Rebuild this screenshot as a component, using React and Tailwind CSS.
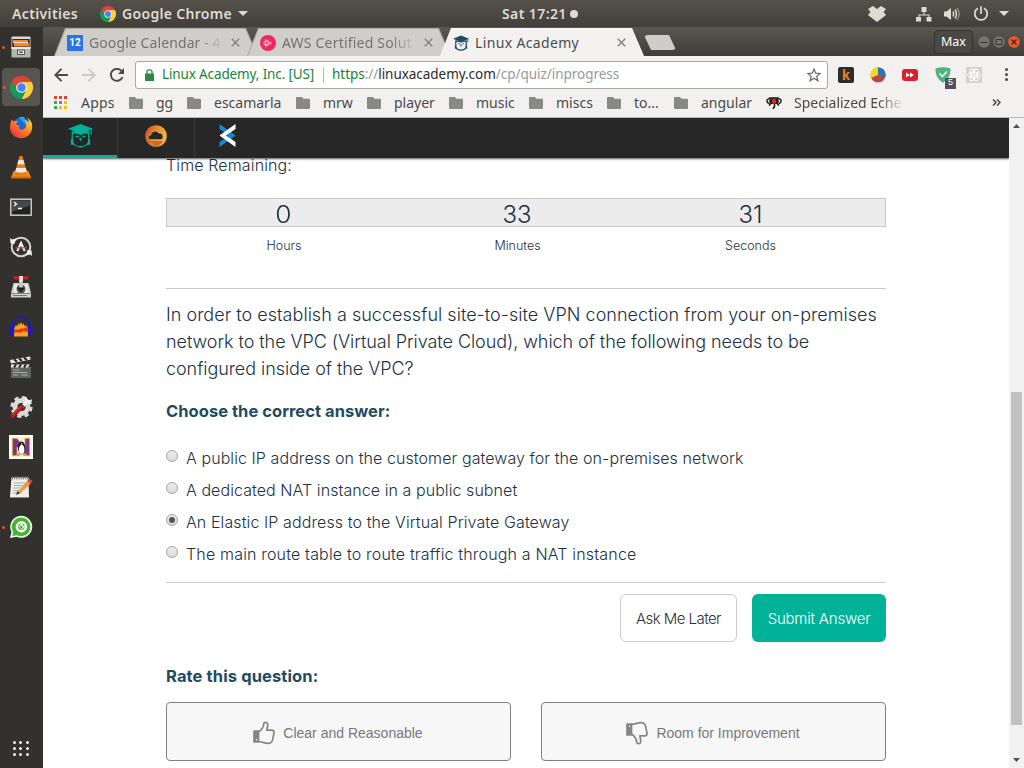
import React from "react";

const ui = "font-['Noto_Sans',sans-serif]";
const page = "font-['Inter',sans-serif]";

function Chrome({ className }) {
  return (
    <svg viewBox="0 0 24 24" className={className}>
      <path d="M1.6 6A12 12 0 0 1 22.4 6L12 6.5 7.24 14.75Z" fill="#db4437" />
      <path d="M22.4 6A12 12 0 0 1 12 24L16.76 14.75 12 6.5Z" fill="#ffcd40" />
      <path d="M12 24A12 12 0 0 1 1.6 6L7.24 14.75 16.76 14.75Z" fill="#0f9d58" />
      <circle cx="12" cy="12" r="5.6" fill="#f1f1f1" />
      <circle cx="12" cy="12" r="4.4" fill="#4285f4" />
    </svg>
  );
}

function Files() {
  return (
    <svg viewBox="0 0 24 24" className="size-6">
      <rect x="2.500" y="1.500" width="19" height="12" rx="1" fill="#d8d8d6" />
      <rect x="3.300" y="4" width="17.400" height="8" fill="#3a2418" />
      <path d="M4 5h15v2H4zM5 8h15v3.500H5z" fill="#ef8a3c" />
      <path d="M4 7h15v1H4z" fill="#fbe3c8" />
      <path d="M2.500 12h19v10.500h-19z" fill="#b4b4b2" />
      <path d="M2.500 12h19v2h-19z" fill="#e8e8e6" />
      <rect x="8.500" y="15" width="7" height="4.500" fill="#eee" stroke="#555" />
      <path d="M10.300 17.300h3.400" stroke="#444" strokeWidth="1.500" />
    </svg>
  );
}

function Firefox() {
  return (
    <svg viewBox="0 0 24 24" className="size-6">
      <defs>
        <linearGradient id="fx" x1="1" y1="0" x2="0.1" y2="1">
          <stop offset="0" stopColor="#fff04a" />
          <stop offset="0.45" stopColor="#ff8a1c" />
          <stop offset="1" stopColor="#f0224e" />
        </linearGradient>
      </defs>
      <circle cx="12.5" cy="11" r="9" fill="#1668d8" />
      <path d="M10 3c2-1.800 4.500-1.500 6-.5-1 .7-1 1.500-.5 2.500 2 1 3 3.500 2.500 6Z" fill="#14a9f5" />
      <path d="M2.800 4.500 4.500 6.600C6 5.500 8 5.600 9 6.500l-2 2.500c.5 1.500 2 1.500 3.800 1.800L9.500 12.800C11 15.500 14 15.300 16.500 12.500c1.500-2.500.5-6-1.500-8 2 .3 4 1.700 4.700 3.500.3-2-.2-4-1.500-5.500C22 5 24 9 23 14c-1.200 5.500-5.500 9.200-11 9.200C5.500 23.200 1 18.500 1 12.500 1 9 1.800 6.500 2.800 4.500Z" fill="url(#fx)" />
    </svg>
  );
}

function Vlc() {
  return (
    <svg viewBox="0 0 24 24" className="size-6">
      <path d="M4.500 16h15L22 23H2Z" fill="#f28a16" />
      <path d="M2 21.500h20V23.500H2Z" fill="#d96b05" />
      <path d="M10.600 1h2.800L18.500 19c-3 2-10 2-13 0Z" fill="#f07c12" />
      <path d="M9.600 5h4.800l1.200 4.200H8.400ZM7.200 13h9.600l1 3.600c-3 1.400-8.600 1.400-11.600 0Z" fill="#e8eaec" />
    </svg>
  );
}

function Terminal() {
  return (
    <svg viewBox="0 0 24 24" className="size-6">
      <rect x="1.800" y="4.200" width="20.400" height="16" fill="#222" stroke="#d6d6d4" strokeWidth="1.400" />
      <path d="M3 5.500h18v5L3 17Z" fill="#45484a" />
      <path d="m5 7 2.500 2L5 11M9 13.500h4" stroke="#fff" strokeWidth="1.300" fill="none" />
    </svg>
  );
}

function Updater() {
  return (
    <svg viewBox="0 0 24 24" className="size-6" fill="none">
      <circle cx="12" cy="12" r="9.300" stroke="#d5d5d3" strokeWidth="2" />
      <path d="M1.500 8.500 1 3l2 1.500L7 3.500 5.500 9ZM22.500 15.500 23 21l-2-1.500-4 1 1.500-5.500Z" fill="#eee" />
      <path d="M8.300 16 12 8l3.700 8" stroke="#fff" strokeWidth="2" />
      <path d="M6.500 12.800h11" stroke="#e05030" strokeWidth="1.300" />
    </svg>
  );
}

function Installer() {
  return (
    <svg viewBox="0 0 24 24" className="size-6">
      <path d="M4.500 8h15L22 18v4.500H2V18Z" fill="#cfcfcd" />
      <path d="M6 9.500h12l1.500 8h-15Z" fill="#efefed" />
      <circle cx="12" cy="14" r="4.500" fill="#54585a" />
      <path d="M2 18.500h20" stroke="#888" />
      <path d="M4 20.500h14" stroke="#777" />
      <path d="M10.300 3h3.400v11h-3.400Z" fill="#c9c9c7" />
      <path d="m8 12.500 4 5 4-5Z" fill="#1d2124" />
      <rect x="4.500" y="1.200" width="15" height="3.200" rx="1.400" fill="#d3191c" />
      <rect x="10" y="1" width="4" height="6" rx="1" fill="#e5e5e3" />
    </svg>
  );
}

function Audacity() {
  return (
    <svg viewBox="0 0 24 24" className="size-6">
      <path d="M5 21.500 5.500 13 7 10l1 1.500L9.500 8l1 2L12 7l1.500 3 1-2L16 11.500l1.500-1.500 1 3 .5 8.500Z" fill="#f3a820" />
      <path d="M5 16c3-3 4 0 6-2s3 1 4.500-1 2.500 1 4 1v2c-3 2-5-1-7 1s-5-1-7.500 1Z" fill="#f03018" />
      <path d="M3 12C4 5 7 2 12 2s8 3 9 10" fill="none" stroke="#1717dc" strokeWidth="1.500" />
      <path d="M4.500 9C-1 12-1 18 4.500 21.500ZM19.500 9C25 12 25 18 19.500 21.500Z" fill="#1717e4" />
    </svg>
  );
}

function Clapper() {
  return (
    <svg viewBox="0 0 24 24" className="size-6">
      <path d="M2 10h20v13H2Z" fill="#606463" />
      <path d="m1 5 20-3.500.7 3L2 8.500Z" fill="#e8e8e6" />
      <path d="m5 4.300 3 2.500M10 3.500l3 2.400M15 2.600 18 5" stroke="#222" strokeWidth="2" />
      <path d="M2 9.500h20v3H2Z" fill="#e8e8e6" />
      <path d="m7 9.500-2 3M12 9.500l-2 3M17 9.500l-2 3M22 9.500l-2 3" stroke="#222" strokeWidth="2" />
      <path d="M4 15h7M4 17.500h14M4 20h5M12 20h7" stroke="#c8ccca" strokeWidth=".7" />
    </svg>
  );
}

function Tools() {
  return (
    <svg viewBox="0 0 24 24" className="size-6" fill="none">
      <circle cx="12.500" cy="12" r="6.500" stroke="#d9d9d7" strokeWidth="5" />
      <circle cx="12.500" cy="12" r="9.600" stroke="#d9d9d7" strokeWidth="3" strokeDasharray="4.200 3.340" />
      <path d="M13 12 19.500 5" stroke="#fff" strokeWidth="3" />
      <path d="M17 1.500c-2 2-1 6 1.500 6.500s5-1 4.500-4l-2.500 2-2-1.500Z" fill="#f2f2f0" />
      <path d="m3.500 21 9.500-9.500" stroke="#b5161a" strokeWidth="4" strokeLinecap="round" />
      <path d="m3.500 20 8.500-8.500" stroke="#e25a55" strokeWidth="1" />
    </svg>
  );
}

function PenguinN() {
  return (
    <svg viewBox="0 0 24 24" className="size-6">
      <path d="M0 0h24v24H0Z" fill="#fff" />
      <path d="M2 2h20v20H2Z" fill="#fbeec4" />
      <path d="M3.500 3.500H8l8 9v-9h4.500v17H16L8 12v8.500H3.500Z" fill="#77388c" stroke="#d6a83e" strokeWidth=".8" />
      <ellipse cx="12.700" cy="13" rx="3.600" ry="6.500" fill="#17171b" />
      <ellipse cx="12.700" cy="14.500" rx="2.700" ry="4.500" fill="#fff" />
      <path d="M7.500 18.500h4l-1 2.500h-3ZM14 18.500h3.500V21h-3Z" fill="#e2a51d" />
      <circle cx="12.700" cy="9" r=".9" fill="#f1b21d" />
    </svg>
  );
}

function Notepad() {
  return (
    <svg viewBox="0 0 24 24" className="size-6">
      <path d="M2.500 2.500h17L20 22H1Z" fill="#eeeeea" />
      <path d="M1 22h19v1H1Z" fill="#888" />
      <path d="M3 3h17" stroke="#777" strokeWidth="3" strokeDasharray="1 1.200" />
      <path d="M5 8h12M5 10.500h11M4.500 13h9M4.500 15.500h6M4 18h4" stroke="#a9a9a5" strokeWidth="1" />
      <path d="m8 18 10-12 3.500 3L11 18.500Z" fill="#f39b3a" />
      <path d="m18 6 2-2.500 3.500 2.500-2 3Z" fill="#d84a43" />
      <path d="m8.500 16-1.500 4 4-1.700Z" fill="#333" />
    </svg>
  );
}

function ChatBubble() {
  return (
    <svg viewBox="0 0 24 24" className="size-6" fill="none">
      <path d="M1 23 2.500 17A11 11 0 1 1 7.500 21.800Z" fill="#f7fff5" />
      <path d="M3.200 21 4.200 17A9.400 9.400 0 1 1 8 20.300Z" fill="#43b72f" />
      <circle cx="12.400" cy="11.700" r="4.500" stroke="#fff" strokeWidth="2.400" />
      <path d="M9.500 11.500 13 8l.8 2.400 2.400.8-3.500 3.300Z" fill="#fff" />
      <circle cx="12.200" cy="12" r="1.500" fill="#43b72f" />
    </svg>
  );
}

const dock = [
  { Icon: Files, running: true },
  { Icon: () => <Chrome className="size-[23px]" />, running: true, active: true },
  { Icon: Firefox },
  { Icon: Vlc },
  { Icon: Terminal },
  { Icon: Updater },
  { Icon: Installer },
  { Icon: Audacity },
  { Icon: Clapper },
  { Icon: Tools },
  { Icon: PenguinN },
  { Icon: Notepad },
  { Icon: ChatBubble, running: true },
];

function Dock() {
  return (
    <nav className="flex w-[43px] shrink-0 flex-col bg-[#33312d]">
      {dock.map(({ Icon, running, active }, i) => (
        <div key={i} className="flex h-10 items-center pl-[2px]">
          <div className={`flex h-[38px] w-[38px] items-center justify-center rounded ${active ? "bg-[#565550]" : ""}`}>
            <span className={`-ml-[7px] mr-[4px] size-[3px] shrink-0 rounded-full ${running ? "bg-[#e95420]" : ""}`} />
            <Icon />
          </div>
        </div>
      ))}
      <div className="mt-auto mb-[12px] ml-[13px] grid w-[16px] grid-cols-3 gap-[3px]">
        {Array.from({ length: 9 }, (_, i) => (
          <span key={i} className="size-[3px] rounded-full bg-[#eeeeec]" />
        ))}
      </div>
    </nav>
  );
}

function TopBar() {
  return (
    <header className={`${ui} flex h-[27px] shrink-0 items-center bg-linear-to-b from-[#55524a] to-[#413f3a] text-[14px] font-semibold text-[#dfdbd2]`}>
      <span className="ml-3 w-[88px] whitespace-nowrap tracking-[0.37px]">Activities</span>
      <Chrome className="size-4" />
      <span className="ml-[6px] w-[116px] whitespace-nowrap tracking-[0.32px]">Google Chrome</span>
      <svg viewBox="0 0 10 5" className="h-[5px] w-[10px]"><path d="M0 0h10L5 5Z" fill="#dfdbd2" /></svg>
      <span className="ml-[254px] w-[68px] whitespace-nowrap tracking-[0.4px]">Sat 17:21</span>
      <span className="size-2 rounded-full bg-[#dfdbd2]" />
      <svg viewBox="0 0 18 16" className="ml-[290px] h-4 w-[18px] shrink-0" fill="#dfdbd2">
        <path d="M5 0 0 3l2.500 3L0 9l2.500 2L9 16l6.500-5L18 9l-2.500-3L18 3l-5-3-4 3Z" />
      </svg>
      <svg viewBox="0 0 16 16" className="ml-[30px] size-4 shrink-0" fill="#dfdbd2">
        <path d="M5.500 1h5v5h-5zM0 11h5v4.500H0zM10.500 11h5v4.500h-5zM7.500 6h1v2.500h5V11h-1V9.500h-9V11h-1V8.500h5z" />
      </svg>
      <svg viewBox="0 0 16 16" className="ml-3 size-4 shrink-0" fill="none" stroke="#dfdbd2" strokeWidth="1.500">
        <path d="M0 5.500h2.500L7 2v12l-4.500-3.500H0Z" fill="#dfdbd2" stroke="none" />
        <path d="M9 5.500q1.500 2.500 0 5" />
        <path d="M11 3.500q3 4.500 0 9" />
        <path d="M13 2q4.500 6 0 12" stroke="#8b8880" />
      </svg>
      <svg viewBox="0 0 16 16" className="ml-[13px] size-4 shrink-0" fill="none" stroke="#dfdbd2" strokeWidth="1.700">
        <path d="M5 2.300a6.200 6.200 0 1 0 6 0M8 .3V8" />
      </svg>
      <svg viewBox="0 0 10 5" className="ml-[10px] h-[5px] w-[10px]"><path d="M0 0h10L5 5Z" fill="#dfdbd2" /></svg>
    </header>
  );
}

function OwlIcon({ className, accent }) {
  return (
    <svg viewBox="0 0 26 26" className={className} fill="none">
      <path d="M4.500 9v6c-1 8 4 9.500 8.500 9.500s9.500-1.500 8.500-9.500V9" fill={accent ? "none" : "#e9eef1"} stroke="currentColor" strokeWidth={accent ? 1.300 : 2} />
      <path d="M3 17v5.500h4Q4.500 20.500 4.500 17ZM23 17v5.500h-4Q21.500 20.500 21.500 17Z" fill="currentColor" />
      <path d="M0 6 13 1l13 5-13 5.500Z" fill="currentColor" />
      <path d="M4.500 8.500 13 10l8.500-1.500v3Q17 10 13 12.500 9 10 4.500 11.500Z" fill="currentColor" />
      <path d="M24 6v6" stroke="currentColor" strokeWidth="1.300" />
      <path d="M8 14.500q1.500-1.500 3 0M15 14.500q1.500-1.500 3 0" stroke="currentColor" strokeWidth="1.300" />
      <path d="M11.500 15.500h3L13 19.500Z" fill="currentColor" />
    </svg>
  );
}

function CloseX() {
  return (
    <svg viewBox="0 0 9 9" className="size-[9px] shrink-0" stroke="#83817d" strokeWidth="1.400">
      <path d="m.8.8 7.400 7.400M8.200.8.8 8.200" />
    </svg>
  );
}

const tabClip = "[clip-path:polygon(11px_0,calc(100%-12px)_0,100%_100%,0_100%)]";

function Tab({ icon, title, active, fade, tracking }) {
  return (
    <div className={`${tabClip} flex h-7 w-[204px] shrink-0 px-[1px] pt-[1px] ${active ? "z-10 bg-[#f8f7f6]" : "-mr-[11px] bg-[#aba9a5]"}`}>
      <div className={`${tabClip} flex w-[202px] items-center pl-[12px] ${active ? "bg-[#f2f1f0] text-[#4c4c4c]" : "bg-[#d0cecb] text-[#737270]"}`}>
        <span className="flex w-[22px] shrink-0">{icon}</span>
        <span className={`w-[133px] shrink-0 text-[14px] whitespace-nowrap ${tracking} ${fade ? "[mask-image:linear-gradient(to_right,black_108px,transparent_135px)]" : ""}`}>
          {title}
        </span>
        <span className="ml-[9px] flex"><CloseX /></span>
      </div>
    </div>
  );
}

function TabStrip() {
  return (
    <div className={`${ui} flex h-[29px] shrink-0 items-end bg-linear-to-b from-[#5a574e] to-[#403e39] pl-[11px]`}>
      <Tab
        title="Google Calendar - 4"
        fade
        tracking="tracking-[0.1px]"
        icon={
          <span className="flex size-4 items-center justify-center bg-[#2a74e8] font-['Roboto',sans-serif] text-[10px] font-bold text-white">12</span>
        }
      />
      <Tab
        title="AWS Certified Solut"
        fade
        tracking="tracking-[0.2px]"
        icon={
          <svg viewBox="0 0 16 16" className="size-4">
            <circle cx="8" cy="8" r="8" fill="#f0285f" />
            <path d="M5.500 4.500 11.500 8l-6 3.500ZM4 6.500h3L9 8 7 9.500H4Z" fill="none" stroke="#ffb5c9" strokeWidth="1" />
          </svg>
        }
      />
      <Tab title="Linux Academy" active tracking="tracking-[0.35px]" icon={<OwlIcon className="size-4 text-[#1f4a60]" />} />
      <div className="mb-[6px] h-[15px] w-[32px] rounded-sm bg-[#cfcdca] [clip-path:polygon(0_0,25px_0,100%_100%,7px_100%)]" />
      <div className="mb-[2px] ml-[258px] flex h-6 w-[39px] shrink-0 items-center justify-center rounded border border-[#34322e] bg-[#4b4943] text-[12.5px] text-white">
        Max
      </div>
      <div className="mb-[8px] ml-[5px] flex gap-[3px]">
        <svg viewBox="0 0 12 12" className="size-3"><circle cx="6" cy="6" r="5.700" fill="#77756e" /><path d="M2.500 6.500h7" stroke="#33312d" /></svg>
        <svg viewBox="0 0 12 12" className="size-3"><circle cx="6" cy="6" r="5.700" fill="#77756e" /><path d="M3 3.500h6v5H3Z" fill="none" stroke="#33312d" /></svg>
        <svg viewBox="0 0 12 12" className="size-3"><circle cx="6" cy="6" r="5.800" fill="#f0592f" /><path d="m3.500 3.500 5 5m0-5-5 5" stroke="#4a2012" strokeWidth="1.200" /></svg>
      </div>
    </div>
  );
}

function AddressRow() {
  return (
    <div className="flex h-[37px] shrink-0 items-center pl-[11px]">
      <svg viewBox="0 0 14 14" className="size-[14px] shrink-0" fill="none" stroke="#4a4a4a" strokeWidth="1.900"><path d="M14 7H1.500M7.500 .8 1.300 7l6.200 6.200" /></svg>
      <svg viewBox="0 0 14 14" className="ml-[14px] size-[14px] shrink-0" fill="none" stroke="#cbcac8" strokeWidth="1.900"><path d="M0 7h12.500M6.500.8 12.700 7l-6.200 6.200" /></svg>
      <svg viewBox="0 0 14 14" className="ml-[14px] size-[14px] shrink-0" fill="none" stroke="#4a4a4a" strokeWidth="1.900"><path d="M12.500 9A6 6 0 1 1 11.500 3" /><path d="M14 0v6H8Z" fill="#4a4a4a" stroke="none" /></svg>
      <div className={`${ui} ml-[11px] flex h-7 w-[693px] shrink-0 items-center rounded-[3px] border border-[#a9a8a6] bg-white pl-[9px] text-[13.5px] whitespace-nowrap text-[#178338]`}>
        <svg viewBox="0 0 9 12" className="h-3 w-[9px] shrink-0"><path d="M0 4.500h9V12H0Z" fill="#2d8a46" /><path d="M2 5V2.800Q2 .8 4.500.8T7 2.800V5" fill="none" stroke="#2d8a46" strokeWidth="1.300" /></svg>
        <span className="ml-2 w-[161px] tracking-[-0.13px]">Linux Academy, Inc. [US]</span>
        <span className="h-4 w-px bg-[#b5b5b5]" />
        <span className="ml-[8px] w-[475px] tracking-[-0.04px]">https<span className="text-[#999]">://</span><span className="text-[#2b2b2b]">linuxacademy.com</span><span className="text-[#999]">/cp/quiz/inprogress</span></span>
        <svg viewBox="0 0 14 14" className="size-[14px] shrink-0" fill="none" stroke="#666" strokeWidth="1.200"><path d="m7 1 1.700 4.200 4.500.3-3.500 2.900 1.200 4.400L7 10.300l-3.900 2.500 1.200-4.400L.8 5.500l4.500-.3Z" /></svg>
      </div>
      <div className="ml-[10px] flex size-4 items-center justify-center rounded-xs bg-[#2d2d2d] font-['Liberation_Sans',sans-serif] text-[14px] leading-none font-bold text-[#f58220]">k</div>
      <svg viewBox="0 0 16 16" className="ml-4 size-4 shrink-0">
        <circle cx="8" cy="8" r="7.500" fill="#c04142" />
        <path d="M8 8V.5A7.500 7.500 0 0 0 1 11Z" fill="#f2da1d" />
        <path d="M8 8V.5A7.500 7.500 0 0 1 15 11Z" fill="#3471ae" />
      </svg>
      <svg viewBox="0 0 16 12" className="ml-4 h-3 w-4 shrink-0">
        <rect width="16" height="12" rx="3" fill="#d9202b" />
        <path d="m4 3.500 4 2.500-4 2.500ZM8 3.500l4 2.500-4 2.500Z" fill="#fff" />
      </svg>
      <div className="relative ml-[17px] h-4 w-4 shrink-0">
        <svg viewBox="0 0 16 16" className="size-4">
          <path d="M.5 1.500Q8-1 15.500 1.500 16 11 8 16 0 11 .5 1.500Z" fill="#4fb477" />
          <path d="M4.500 6.500 7.500 9.500 12 4.500" fill="none" stroke="#fff" strokeWidth="1.500" />
        </svg>
        <span className="absolute top-[11px] left-[10px] flex h-[11px] w-[11px] items-center justify-center bg-[#505459] font-['Liberation_Sans',sans-serif] text-[9px] text-white">5</span>
      </div>
      <svg viewBox="0 0 16 16" className="ml-[15px] size-4 shrink-0" fill="none" stroke="#fff">
        <path d="M0 0h16v16H0Z" fill="#d3d2d0" stroke="none" />
        <ellipse cx="8" cy="8" rx="6.500" ry="2.600" />
        <ellipse cx="8" cy="8" rx="6.500" ry="2.600" transform="rotate(60 8 8)" />
        <ellipse cx="8" cy="8" rx="6.500" ry="2.600" transform="rotate(120 8 8)" />
        <circle cx="8" cy="8" r="1" fill="#fff" />
      </svg>
      <div className="ml-[23px] flex flex-col gap-[2px]">
        <span className="size-[3px] rounded-full bg-[#4a4a4a]" />
        <span className="size-[3px] rounded-full bg-[#4a4a4a]" />
        <span className="size-[3px] rounded-full bg-[#4a4a4a]" />
      </div>
    </div>
  );
}

function Folder() {
  return (
    <svg viewBox="0 0 14 12" className="h-3 w-[14px] shrink-0">
      <path d="M1 0h5l1.500 1.800H13a1 1 0 0 1 1 1V11a1 1 0 0 1-1 1H1a1 1 0 0 1-1-1V1a1 1 0 0 1 1-1Z" fill="#888886" />
    </svg>
  );
}

const folders = [
  ["gg", "w-[31px]"],
  ["escamarla", "w-[82px]"],
  ["mrw", "w-[44px]"],
  ["player", "w-[55px]"],
  ["music", "w-[53px]"],
  ["miscs", "w-[51px]"],
  ["to...", "w-[40px]"],
  ["angular", "w-[65px]"],
];

function Bookmarks() {
  const squares = [
    "bg-[#ea4335]", "bg-[#ea4335]", "bg-[#ea4335]",
    "bg-[#34a853]", "bg-[#4285f4]", "bg-[#fbbc05]",
    "bg-[#34a853]", "bg-[#fbbc05]", "bg-[#fbbc05]",
  ];
  return (
    <div className={`${ui} flex h-[25px] shrink-0 items-center border-b border-[#b9b8b6] pb-[5px] pl-[11px] text-[14px] whitespace-nowrap text-[#4a4a4a]`}>
      <div className="grid w-[13px] shrink-0 grid-cols-3 gap-[2px]">
        {squares.map((c, i) => <span key={i} className={`size-[3px] ${c}`} />)}
      </div>
      <span className="ml-[14px] w-[48px] shrink-0 tracking-[0.2px]">Apps</span>
      {folders.map(([name, w]) => (
        <div key={name} className="flex shrink-0 items-center">
          <Folder />
          <span className={`ml-[13px] ${w}`}>{name}</span>
        </div>
      ))}
      <svg viewBox="0 0 16 12" className="h-3 w-4 shrink-0" fill="none" stroke="#17110f" strokeWidth="1.500">
        <path d="M3.500 6.500Q.5 6 1 3l3-2h8l3 2q.5 3-2.500 3.500" strokeWidth="1.300" />
        <path d="M4 1.500h8l1 3-2 2.500H5L3 4.500Z" fill="#2a1512" stroke="none" />
        <circle cx="8" cy="4.500" r="2.400" fill="#e0281a" stroke="none" />
        <path d="M8.500 7v2.500L7 12M5.500 6 3 8.500M10.500 6 13 8.500" />
      </svg>
      <span className="ml-[12px] w-[112px] shrink-0 [mask-image:linear-gradient(to_right,black_85px,transparent_110px)]">Specialized Eche</span>
      <svg viewBox="0 0 9 7" className="ml-[86px] h-[7px] w-[9px] shrink-0" fill="none" stroke="#4a4a4a" strokeWidth="1.500"><path d="m1 .5 3 3-3 3M5 .5l3 3-3 3" /></svg>
    </div>
  );
}

function SiteNav() {
  return (
    <div className="z-10 flex h-10 shrink-0 bg-[#272727] shadow-[0_1px_2px_rgba(0,0,0,0.65)]">
      <div className="flex w-[74px] items-center justify-center border-b-[3px] border-[#00b398]">
        <OwlIcon accent className="-mt-[2px] h-[25px] w-[25px] text-[#00b398]" />
      </div>
      <div className="flex w-[78px] items-center justify-center border-x border-[#3c3c3c] pb-[5px]">
        <svg viewBox="0 0 22 22" className="size-[22px]">
          <defs>
            <linearGradient id="ring" x1="0" y1="0.300" x2="1" y2="0.500">
              <stop offset="0" stopColor="#d0552b" />
              <stop offset="1" stopColor="#f1bd42" />
            </linearGradient>
          </defs>
          <circle cx="11" cy="11" r="10.800" fill="url(#ring)" />
          <path d="M1 10Q1 17 8 18Q4 16 4 14ZM7 16h11q-3 6-9 5Z" fill="#d8652e" />
          <path d="M5.500 14.800C2 14.800 2.200 10.200 5.500 10 6.200 5.800 11.500 4.500 14 8c4.500-.8 5.800 6.300 1.500 6.800Z" fill="#272727" stroke="#f1bd42" strokeWidth=".9" />
        </svg>
      </div>
      <div className="flex w-[65px] items-center justify-center pb-[5px]">
        <svg viewBox="0 0 17 23" className="h-[23px] w-[17px]">
          <path d="M.5 0v5l10 6.500-10 6.500v5L16.500 11.500Z" fill="#0b8ed3" />
          <path d="M16.500 0v5L7 11.500l9.500 6.500v5L.5 11.500Z" fill="#fff" />
          <path d="m7 11.500 3.500-2.300 3 2.300-3 2.300Z" fill="#0b8ed3" />
        </svg>
      </div>
    </div>
  );
}

function ThumbUp({ className }) {
  return (
    <svg viewBox="0 0 22 24" className={className} fill="none" stroke="#858585" strokeWidth="1.700" strokeLinejoin="round">
      <path d="M1 10h4.500v11H1Z" fill="#858585" />
      <circle cx="3.600" cy="18.800" r=".7" fill="#f7f7f7" stroke="none" />
      <path d="M5.500 11C8.500 9 10.500 6 10.800 2.500 11 .8 14.500.8 14.700 3c.2 2-.5 4.500-.9 6.200h5c1.500 0 2.500 1 2.200 2.500L20 17c-.5 3.500-1.500 5.300-4.500 5.300-4 0-6-1.300-10-1.800" />
    </svg>
  );
}

const question = [
  ["In order to establish a successful site-to-site VPN connection from your on-premises", "tracking-[0.03px]"],
  ["network to the VPC (Virtual Private Cloud), which of the following needs to be", "tracking-[-0.06px]"],
  ["configured inside of the VPC?", "tracking-[-0.06px]"],
];

const answers = [
  ["A public IP address on the customer gateway for the on-premises network", "tracking-[0.08px]"],
  ["A dedicated NAT instance in a public subnet", "tracking-[0.07px]"],
  ["An Elastic IP address to the Virtual Private Gateway", "tracking-[0.1px]", true],
  ["The main route table to route traffic through a NAT instance", "tracking-[0.17px]"],
];

function Quiz() {
  return (
    <main className={`${page} ml-[123px] flex w-[720px] shrink-0 flex-col font-light text-[#22303f]`}>
      <div className="-mt-[5px] h-[25px] text-[16px] leading-6 tracking-[0.13px]">Time Remaining:</div>
      <div className="mt-5 flex h-[29px] border border-[#c8c8c8] bg-[#ececec] text-center text-[24px] leading-[31px]">
        <span className="w-[233px] origin-center scale-x-110">0</span>
        <span className="w-[234px]">33</span>
        <span className="w-[233px]">31</span>
      </div>
      <div className="mt-[10px] flex h-[18px] pl-[1px] text-center text-[12.5px] leading-[18px]">
        <span className="w-[234px]">Hours</span>
        <span className="w-[233px]">Minutes</span>
        <span className="w-[233px]">Seconds</span>
      </div>
      <div className="mt-[33px] h-px shrink-0 bg-[#c9cacb]" />
      <p className="mt-[12px] flex flex-col text-[18px] leading-[27px] whitespace-nowrap">
        {question.map(([line, tracking]) => <span key={line} className={tracking}>{line}</span>)}
      </p>
      <h2 className="mt-[17px] h-6 text-[16.5px] leading-6 font-bold tracking-[0.04px] text-[#1f4b60]">Choose the correct answer:</h2>
      <div className="mt-[19px] flex flex-col">
        {answers.map(([text, tracking, checked]) => (
          <label key={text} className="flex h-8 items-center text-[16px] whitespace-nowrap">
            <span className="mr-2 mb-[5px] flex size-3 shrink-0 items-center justify-center rounded-full border border-[#a3a3a3] bg-linear-to-b from-[#ececec] to-[#dcdcdc]">
              {checked && <span className="size-[6px] rounded-full bg-[#565656]" />}
            </span>
            <span className={tracking}>{text}</span>
          </label>
        ))}
      </div>
      <div className="mt-[12px] h-px shrink-0 bg-[#c9cacb]" />
      <div className="mt-[11px] flex justify-end gap-[15px] text-[15px] whitespace-nowrap">
        <button className="h-12 w-[117px] rounded-md border border-[#cccccc] bg-white pt-[2px] tracking-[-0.55px] text-[#2e2e38]">Ask Me Later</button>
        <button className="h-12 w-[134px] rounded-md bg-[#00b398] pt-[2px] tracking-[-0.2px] text-white">Submit Answer</button>
      </div>
      <h2 className="mt-[22px] h-6 text-[16.5px] leading-6 font-bold tracking-[0.12px] text-[#1f4b60]">Rate this question:</h2>
      <div className="mt-[14px] flex gap-[30px] font-['Liberation_Sans',sans-serif] text-[14px] font-normal text-[#777]">
        <button className="flex h-[59px] w-[345px] items-center justify-center rounded border border-[#808080] bg-[#f7f7f7] pt-[3px] pr-px">
          <ThumbUp className="mr-[8px] h-[24px] w-[22px]" />
          Clear and Reasonable
        </button>
        <button className="flex h-[59px] w-[345px] items-center justify-center rounded border border-[#808080] bg-[#f7f7f7] pt-[3px] pr-px">
          <ThumbUp className="mr-[8px] h-[24px] w-[22px] -scale-y-100" />
          Room for Improvement
        </button>
      </div>
    </main>
  );
}

function Scrollbar() {
  return (
    <div className="flex w-[15px] shrink-0 flex-col items-center bg-[#f1f1f1]">
      <svg viewBox="0 0 7 4" className="mt-[6px] h-[4px] w-[7px] shrink-0"><path d="M0 4h7L3.500 0Z" fill="#505050" /></svg>
      <div className="mt-[264px] h-[333px] w-[11px] shrink-0 bg-[#c1c1c1]" />
      <svg viewBox="0 0 7 4" className="mt-auto mb-[6px] h-[4px] w-[7px] shrink-0"><path d="M0 0h7L3.500 4Z" fill="#505050" /></svg>
    </div>
  );
}

export default function App() {
  return (
    <div className="flex h-[768px] w-[1024px] flex-col overflow-hidden bg-white">
      <TopBar />
      <div className="flex min-h-0 flex-1">
        <Dock />
        <div className="flex w-[981px] flex-col">
          <TabStrip />
          <div className="flex h-[62px] shrink-0 flex-col bg-[#f2f1f0]">
            <AddressRow />
            <Bookmarks />
          </div>
          <div className="flex min-h-0 flex-1">
            <div className="flex w-[966px] flex-col overflow-hidden">
              <SiteNav />
              <Quiz />
            </div>
            <Scrollbar />
          </div>
        </div>
      </div>
    </div>
  );
}
